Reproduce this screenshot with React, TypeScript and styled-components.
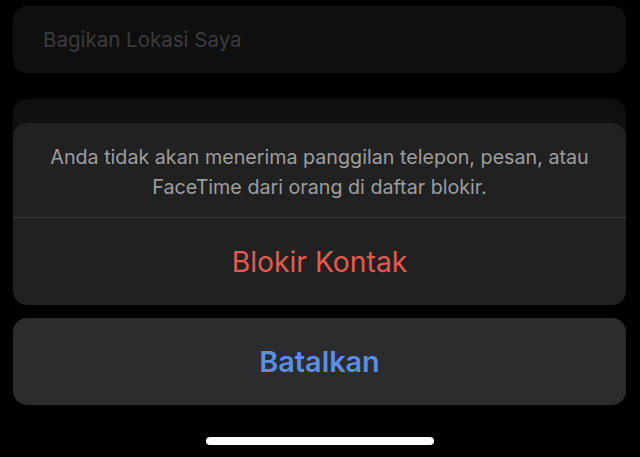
import React from "react";
import styled, { createGlobalStyle } from "styled-components";

const GlobalStyle = createGlobalStyle`
  html, body {
    margin: 0;
    padding: 0;
    background: #000;
  }
  body {
    font-family: Inter, "Noto Sans", "Liberation Sans", sans-serif;
    -webkit-font-smoothing: antialiased;
  }
`;

const Screen = styled.div`
  position: relative;
  width: 640px;
  height: 457px;
  overflow: hidden;
  background: #000;
`;

const Content = styled.div`
  display: flex;
  flex-direction: column;
  gap: 26px;
  padding: 6px 14px 0 13px;
`;

const Card = styled.div<{ $height: number }>`
  height: ${(p) => p.$height}px;
  background: #0f0f10;
  border-radius: 14px;
  display: flex;
  align-items: center;
  padding: 0 30px;
`;

const CardLabel = styled.span`
  font-size: 20.5px;
  color: #3b3b3d;
`;

const Sheet = styled.div`
  position: absolute;
  left: 13px;
  right: 14px;
  bottom: 0;
  display: flex;
  flex-direction: column;
  gap: 13px;
`;

const Group = styled.div<{ $bg: string }>`
  background: ${(p) => p.$bg};
  border-radius: 14px;
  overflow: hidden;
  display: flex;
  flex-direction: column;
`;

const Message = styled.div`
  height: 95px;
  box-sizing: border-box;
  border-bottom: 1px solid #3a3a3c;
  display: flex;
  align-items: center;
  justify-content: center;
  text-align: center;
  padding: 4px 20px 0;
  font-size: 19.7px;
  line-height: 30px;
  color: #9d9d9f;
`;

const Action = styled.button<{ $color: string; $weight: number; $size: number }>`
  height: 87px;
  border: none;
  background: transparent;
  font-family: inherit;
  font-size: ${(p) => p.$size}px;
  font-weight: ${(p) => p.$weight};
  color: ${(p) => p.$color};
  padding: 0;
  cursor: pointer;
`;

const HomeArea = styled.div`
  height: 39px;
  display: flex;
  justify-content: center;
  padding-top: 19px;
  box-sizing: border-box;
`;

const HomeIndicator = styled.div`
  width: 228px;
  height: 8px;
  border-radius: 4px;
  background: #fff;
`;

export default function App() {
  return (
    <Screen>
      <GlobalStyle />
      <Content>
        <Card $height={67}>
          <CardLabel>Bagikan Lokasi Saya</CardLabel>
        </Card>
        <Card $height={120} />
      </Content>
      <Sheet>
        <Group $bg="#212121">
          <Message>
            Anda tidak akan menerima panggilan telepon, pesan, atau FaceTime dari orang di daftar blokir.
          </Message>
          <Action $color="#e35a4e" $weight={400} $size={28.3}>
            Blokir Kontak
          </Action>
        </Group>
        <Group $bg="#2c2c2e">
          <Action $color="#5b8fe6" $weight={600} $size={28.8}>
            Batalkan
          </Action>
        </Group>
        <HomeArea>
          <HomeIndicator />
        </HomeArea>
      </Sheet>
    </Screen>
  );
}
